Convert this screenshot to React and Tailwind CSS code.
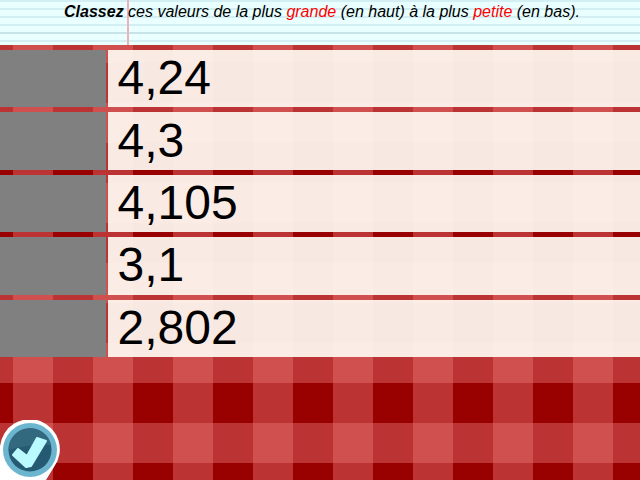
const rows = ["4,24", "4,3", "4,105", "3,1", "2,802"];

function CheckBadge() {
  return (
    <svg className="absolute bottom-0 left-0" width="60" height="60" viewBox="0 0 60 60">
      <path d="M0 60V26A30 30 0 1 1 54 47L46 60Z" fill="#fff" />
      <circle cx="30" cy="30" r="27" fill="#6cb5cf" />
      <circle cx="30" cy="30" r="21.5" fill="#265a73" />
      <path d="M8.5 30A21.5 21.5 0 0 1 51 25C38 24 22 26 8.5 30Z" fill="#33697f" />
      <polygon
        points="37,18 46,21 31,46 26,47 13,35 18,29 27,36"
        fill="#b9fbff"
        stroke="#b9fbff"
        strokeWidth="2"
        strokeLinejoin="round"
      />
    </svg>
  );
}

export default function App() {
  return (
    <div className="relative h-[480px] w-[640px] overflow-hidden bg-[conic-gradient(#d05050_25%,#bb3333_0_50%,#990000_0_75%,#bb3333_0)] bg-[length:80px_80px] bg-[position:53px_23px] font-['Liberation_Sans',sans-serif]">
      <div className="relative h-[45px] bg-[#eaffff] bg-[repeating-linear-gradient(to_bottom,#d3eff3_0,#d3eff3_2px,transparent_2px,transparent_8px)] text-center">
        <div className="absolute top-[32px] right-0 left-0 h-[2px] bg-[#c6e3e7]" />
        <div className="absolute top-0 bottom-0 left-[127px] w-[2px] bg-[#f0b0b4]" />
        <p className="relative pt-[3px] pl-[4px] text-[16px] leading-[18px] text-black italic">
          <b>Classez</b> ces valeurs de la plus <span className="text-[#ff0000]">grande</span> (en haut) à la plus{" "}
          <span className="text-[#ff0000]">petite</span> (en bas).
        </p>
      </div>
      <div className="mt-[5px] grid h-[307px] grid-rows-5 gap-[5px]">
        {rows.map((value) => (
          <div key={value} className="flex">
            <div className="w-[106px] bg-[#808080]" />
            <div className="ml-[2px] flex flex-1 items-center bg-[#fdf4ee]/95 pb-[1px] pl-[9.5px] text-[48px] leading-none text-black">
              {value}
            </div>
          </div>
        ))}
      </div>
      <CheckBadge />
    </div>
  );
}
